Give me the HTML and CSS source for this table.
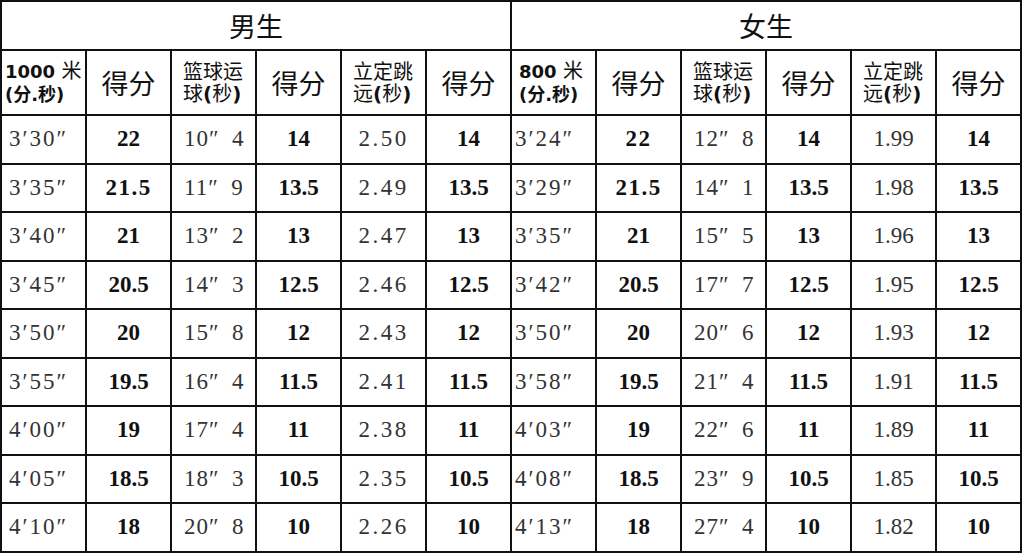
FILE: index.html
```html
<!DOCTYPE html>
<html lang="zh-CN">
<head>
<meta charset="utf-8">
<title>体育成绩评分表</title>
<link rel="stylesheet" href="styles.css">
</head>
<body>
<table class="score">
  <colgroup>
    <col><col><col><col><col><col><col><col><col><col><col><col>
  </colgroup>
  <thead>
    <tr class="r-group">
      <th colspan="6" class="group">男生</th>
      <th colspan="6" class="group">女生</th>
    </tr>
    <tr class="r-head">
      <th class="lbl lbl-run"><span class="b">1000 </span>米<br><span class="b">(分.秒)</span></th>
      <th class="pts-h">得分</th>
      <th class="lbl lbl-pad">篮球运<br>球<span class="b">(</span>秒<span class="b">)</span></th>
      <th class="pts-h">得分</th>
      <th class="lbl lbl-pad">立定跳<br>远<span class="b">(</span>秒<span class="b">)</span></th>
      <th class="pts-h">得分</th>
      <th class="lbl lbl-run2"><span class="b">800 </span>米<br><span class="b">(分.秒)</span></th>
      <th class="pts-h">得分</th>
      <th class="lbl lbl-pad">篮球运<br>球<span class="b">(</span>秒<span class="b">)</span></th>
      <th class="pts-h">得分</th>
      <th class="lbl lbl-pad">立定跳<br>远<span class="b">(</span>秒<span class="b">)</span></th>
      <th class="pts-h">得分</th>
    </tr>
  </thead>
  <tbody>
    <tr>
      <td class="t1">3′30″</td><td class="p">22</td><td class="t3">10″&ensp;4</td><td class="p">14</td><td class="m">2.50</td><td class="p">14</td>
      <td class="t7">3′24″</td><td class="p s">22</td><td class="t3">12″&ensp;8</td><td class="p">14</td><td class="f">1.99</td><td class="p">14</td>
    </tr>
    <tr>
      <td class="t1">3′35″</td><td class="p s">21.5</td><td class="t3">11″&ensp;9</td><td class="p">13.5</td><td class="m">2.49</td><td class="p">13.5</td>
      <td class="t7">3′29″</td><td class="p s">21.5</td><td class="t3">14″&ensp;1</td><td class="p">13.5</td><td class="f">1.98</td><td class="p">13.5</td>
    </tr>
    <tr>
      <td class="t1">3′40″</td><td class="p">21</td><td class="t3">13″&ensp;2</td><td class="p">13</td><td class="m">2.47</td><td class="p">13</td>
      <td class="t7">3′35″</td><td class="p">21</td><td class="t3">15″&ensp;5</td><td class="p">13</td><td class="f">1.96</td><td class="p">13</td>
    </tr>
    <tr>
      <td class="t1">3′45″</td><td class="p">20.5</td><td class="t3">14″&ensp;3</td><td class="p">12.5</td><td class="m">2.46</td><td class="p">12.5</td>
      <td class="t7">3′42″</td><td class="p">20.5</td><td class="t3">17″&ensp;7</td><td class="p">12.5</td><td class="f">1.95</td><td class="p">12.5</td>
    </tr>
    <tr>
      <td class="t1">3′50″</td><td class="p">20</td><td class="t3">15″&ensp;8</td><td class="p">12</td><td class="m">2.43</td><td class="p">12</td>
      <td class="t7">3′50″</td><td class="p">20</td><td class="t3">20″&ensp;6</td><td class="p">12</td><td class="f">1.93</td><td class="p">12</td>
    </tr>
    <tr>
      <td class="t1">3′55″</td><td class="p">19.5</td><td class="t3">16″&ensp;4</td><td class="p">11.5</td><td class="m">2.41</td><td class="p">11.5</td>
      <td class="t7">3′58″</td><td class="p">19.5</td><td class="t3">21″&ensp;4</td><td class="p">11.5</td><td class="f">1.91</td><td class="p">11.5</td>
    </tr>
    <tr>
      <td class="t1">4′00″</td><td class="p">19</td><td class="t3">17″&ensp;4</td><td class="p">11</td><td class="m">2.38</td><td class="p">11</td>
      <td class="t7">4′03″</td><td class="p">19</td><td class="t3">22″&ensp;6</td><td class="p">11</td><td class="f">1.89</td><td class="p">11</td>
    </tr>
    <tr>
      <td class="t1">4′05″</td><td class="p">18.5</td><td class="t3">18″&ensp;3</td><td class="p">10.5</td><td class="m">2.35</td><td class="p">10.5</td>
      <td class="t7">4′08″</td><td class="p">18.5</td><td class="t3">23″&ensp;9</td><td class="p">10.5</td><td class="f">1.85</td><td class="p">10.5</td>
    </tr>
    <tr>
      <td class="t1">4′10″</td><td class="p">18</td><td class="t3">20″&ensp;8</td><td class="p">10</td><td class="m">2.26</td><td class="p">10</td>
      <td class="t7">4′13″</td><td class="p">18</td><td class="t3">27″&ensp;4</td><td class="p">10</td><td class="f">1.82</td><td class="p">10</td>
    </tr>
  </tbody>
</table>
</body>
</html>
```
FILE: styles.css
```css
html, body {
  margin: 0;
  padding: 0;
  background: #ffffff;
}

.score {
  border-collapse: collapse;
  table-layout: fixed;
  width: 1022px;
  margin: 0;
  color: #111;
  font-family: "Liberation Serif", "Noto Sans CJK SC", serif;
}

.score col {
  width: 85px;
}

.score th,
.score td {
  border: 2px solid #111;
  padding: 0;
  white-space: nowrap;
  overflow: hidden;
}

.score .r-group th {
  height: 47px;
}

.score .r-head th {
  height: 63px;
}

.score tbody td {
  height: 46.5px;
  font-size: 23px;
  vertical-align: middle;
}

.score .group {
  font-family: "Noto Sans CJK SC", sans-serif;
  font-weight: 400;
  font-size: 27px;
  line-height: 30px;
  text-align: center;
}

.score .pts-h {
  font-family: "Noto Sans CJK SC", sans-serif;
  font-weight: 400;
  font-size: 27px;
  text-align: center;
}

.score .lbl {
  font-family: "DejaVu Sans", "Noto Sans CJK SC", sans-serif;
  font-weight: 400;
  font-size: 20px;
  line-height: 22px;
  text-align: left;
  vertical-align: middle;
}

.score .lbl .b {
  font-weight: 700;
}

.score .lbl-run {
  padding-left: 3px;
}

.score .lbl-run2 {
  padding-left: 7px;
}

.score .lbl-pad {
  padding-left: 11px;
}

.score .lbl-run .b,
.score .lbl-run2 .b {
  font-size: 18px;
}

.score .t1 {
  text-align: left;
  padding-left: 7px;
  color: #333;
  letter-spacing: 2px;
}

.score .t3 {
  text-align: left;
  padding-left: 12px;
  color: #333;
  letter-spacing: 1px;
}

.score .t7 {
  text-align: left;
  padding-left: 3px;
  color: #333;
  letter-spacing: 2px;
}

.score .p {
  text-align: center;
  font-weight: 700;
  font-size: 23px;
}

.score .p.s {
  font-weight: 600;
  letter-spacing: 1.5px;
}

.score .m {
  text-align: center;
  color: #333;
  letter-spacing: 2.5px;
}

.score .f {
  text-align: center;
  color: #333;
}
```
